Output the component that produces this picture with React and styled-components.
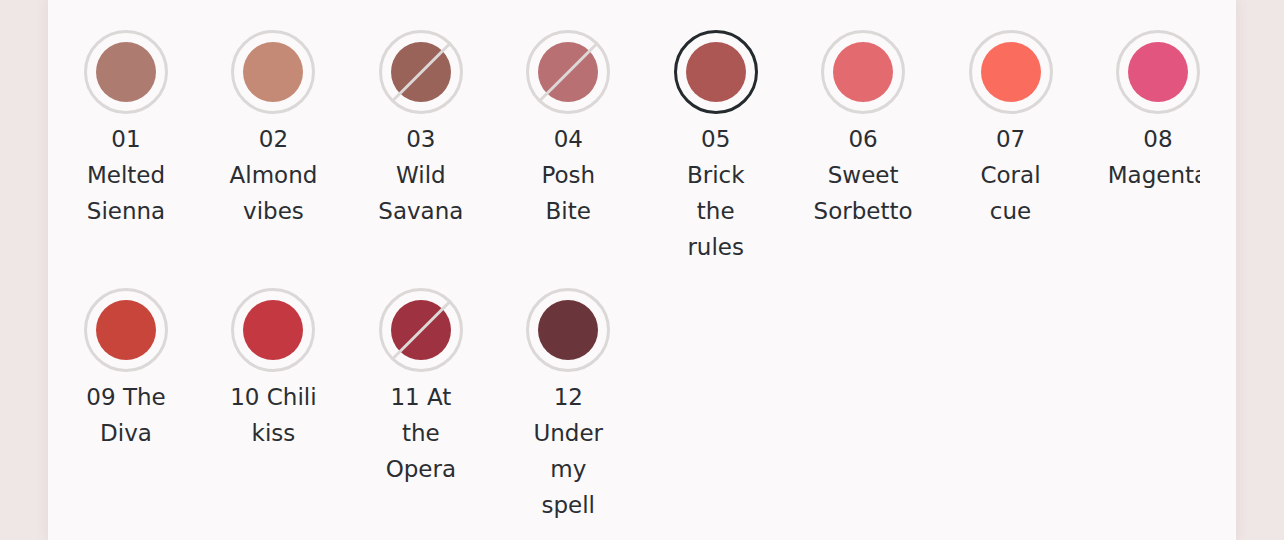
import React from "react";
import styled, { createGlobalStyle } from "styled-components";

const Global = createGlobalStyle`
  html, body { margin: 0; padding: 0; background: #efe6e6; }
  body { font-family: "DejaVu Sans", "Liberation Sans", sans-serif; }
`;

const Page = styled.div`
  min-height: 540px;
  padding: 0 48px;
  box-sizing: border-box;
`;

const Card = styled.section`
  background: #fbf9f9;
  min-height: 540px;
  padding: 30px 36px 0;
  box-sizing: border-box;
  box-shadow: 0 0 12px rgba(150, 110, 110, 0.12);
`;

const Grid = styled.div`
  display: grid;
  grid-template-columns: repeat(8, 84px);
  justify-content: space-between;
  row-gap: 23px;
  overflow: hidden;
`;

const Item = styled.button`
  all: unset;
  display: flex;
  flex-direction: column;
  align-items: center;
  width: 84px;
  cursor: pointer;
`;

const Ring = styled.span`
  position: relative;
  display: flex;
  align-items: center;
  justify-content: center;
  width: 84px;
  height: 84px;
  box-sizing: border-box;
  border-radius: 50%;
  border: 3px solid ${(p) => (p.$selected ? "#252a2e" : "#dcd8d8")};
`;

const Dot = styled.span`
  width: 60px;
  height: 60px;
  border-radius: 50%;
  background: ${(p) => p.$color};
`;

const Strike = styled.span`
  position: absolute;
  left: 50%;
  top: 50%;
  width: 80px;
  height: 3px;
  margin-left: -40px;
  margin-top: -1.5px;
  background: #dcd8d8;
  transform: rotate(-45deg);
`;

const Label = styled.span`
  display: flex;
  flex-direction: column;
  align-items: center;
  width: 84px;
  margin-top: 7px;
  font-size: 23px;
  line-height: 36px;
  color: #2a2e33;
  font-family: "DejaVu Sans", "Liberation Sans", sans-serif;
`;

const Line = styled.span`
  white-space: nowrap;
`;

const shades = [
  { lines: ["01", "Melted", "Sienna"], color: "#ad7b6f" },
  { lines: ["02", "Almond", "vibes"], color: "#c58a75" },
  { lines: ["03", "Wild", "Savana"], color: "#9a6359", out: true },
  { lines: ["04", "Posh", "Bite"], color: "#b87072", out: true },
  { lines: ["05", "Brick", "the", "rules"], color: "#ad5754", selected: true },
  { lines: ["06", "Sweet", "Sorbetto"], color: "#e36b70" },
  { lines: ["07", "Coral", "cue"], color: "#f96c5e" },
  { lines: ["08", "Magenta"], color: "#e2557e" },
  { lines: ["09 The", "Diva"], color: "#c8453b" },
  { lines: ["10 Chili", "kiss"], color: "#c43842" },
  { lines: ["11 At", "the", "Opera"], color: "#9f3240", out: true },
  { lines: ["12", "Under", "my", "spell"], color: "#6b363b" },
];

export default function App() {
  return (
    <>
      <Global />
      <Page>
        <Card>
          <Grid>
            {shades.map((s) => (
              <Item key={s.lines.join(" ")} aria-label={s.lines.join(" ")}>
                <Ring $selected={s.selected}>
                  <Dot $color={s.color} />
                  {s.out && <Strike />}
                </Ring>
                <Label>
                  {s.lines.map((l) => (
                    <Line key={l}>{l}</Line>
                  ))}
                </Label>
              </Item>
            ))}
          </Grid>
        </Card>
      </Page>
    </>
  );
}
